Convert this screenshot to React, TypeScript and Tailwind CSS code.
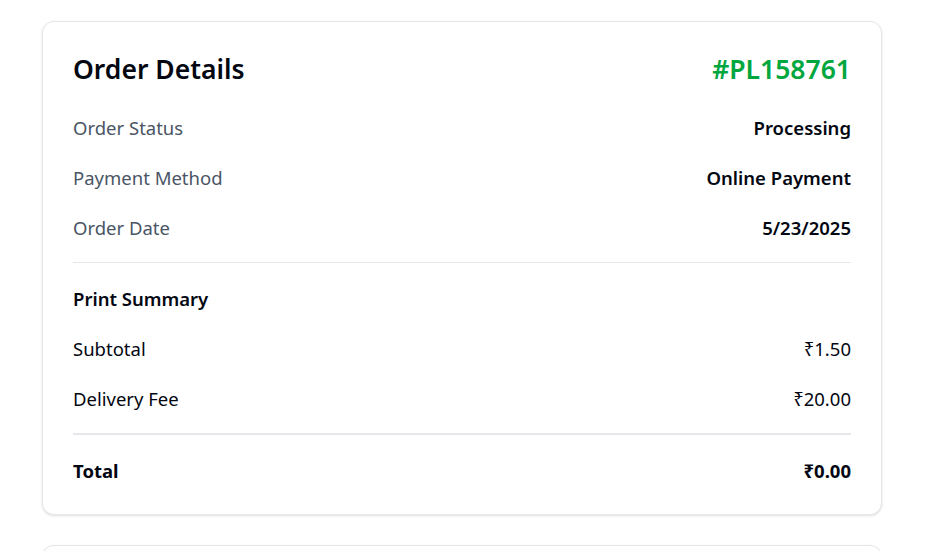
export default function App() {
  const details = [
    { label: "Order Status", value: "Processing" },
    { label: "Payment Method", value: "Online Payment" },
    { label: "Order Date", value: "5/23/2025" },
  ];

  return (
    <div className="h-screen overflow-hidden bg-white pt-[21px] font-['Noto_Sans',sans-serif]">
      <div className="mx-[42px] w-[840px] rounded-xl border border-gray-200 bg-white px-[30px] pt-[29px] pb-[29px] shadow-sm">
        {/* Header */}
        <div className="flex items-center justify-between">
          <h1 className="text-[26.5px] leading-9 font-semibold text-gray-950">
            Order Details
          </h1>
          <span className="text-[26.5px] leading-9 font-semibold text-green-600">
            #PL158761
          </span>
        </div>

        {/* Order info */}
        <div className="mt-[27px] flex flex-col gap-[22px]">
          {details.map((row) => (
            <div key={row.label} className="flex items-center justify-between text-[18.5px] leading-7">
              <span className="text-gray-600">{row.label}</span>
              <span className="font-semibold text-gray-950">{row.value}</span>
            </div>
          ))}
        </div>

        <div className="mt-[20px] border-t border-gray-200" />

        {/* Print summary */}
        <div className="mt-[22px] flex flex-col gap-[22px] text-[18.5px] leading-7 text-gray-950">
          <h2 className="font-semibold">Print Summary</h2>
          <div className="flex items-center justify-between">
            <span>Subtotal</span>
            <span>₹1.50</span>
          </div>
          <div className="flex items-center justify-between">
            <span>Delivery Fee</span>
            <span>₹20.00</span>
          </div>
        </div>

        <div className="mt-[20px] border-t-2 border-gray-200" />

        <div className="mt-[22px] flex items-center justify-between text-[18.5px] leading-7 font-bold text-gray-950">
          <span>Total</span>
          <span>₹0.00</span>
        </div>
      </div>

      {/* Next card */}
      <div className="mx-[42px] mt-[30px] h-[120px] w-[840px] rounded-xl border border-gray-200 bg-white shadow-sm" />
    </div>
  );
}
